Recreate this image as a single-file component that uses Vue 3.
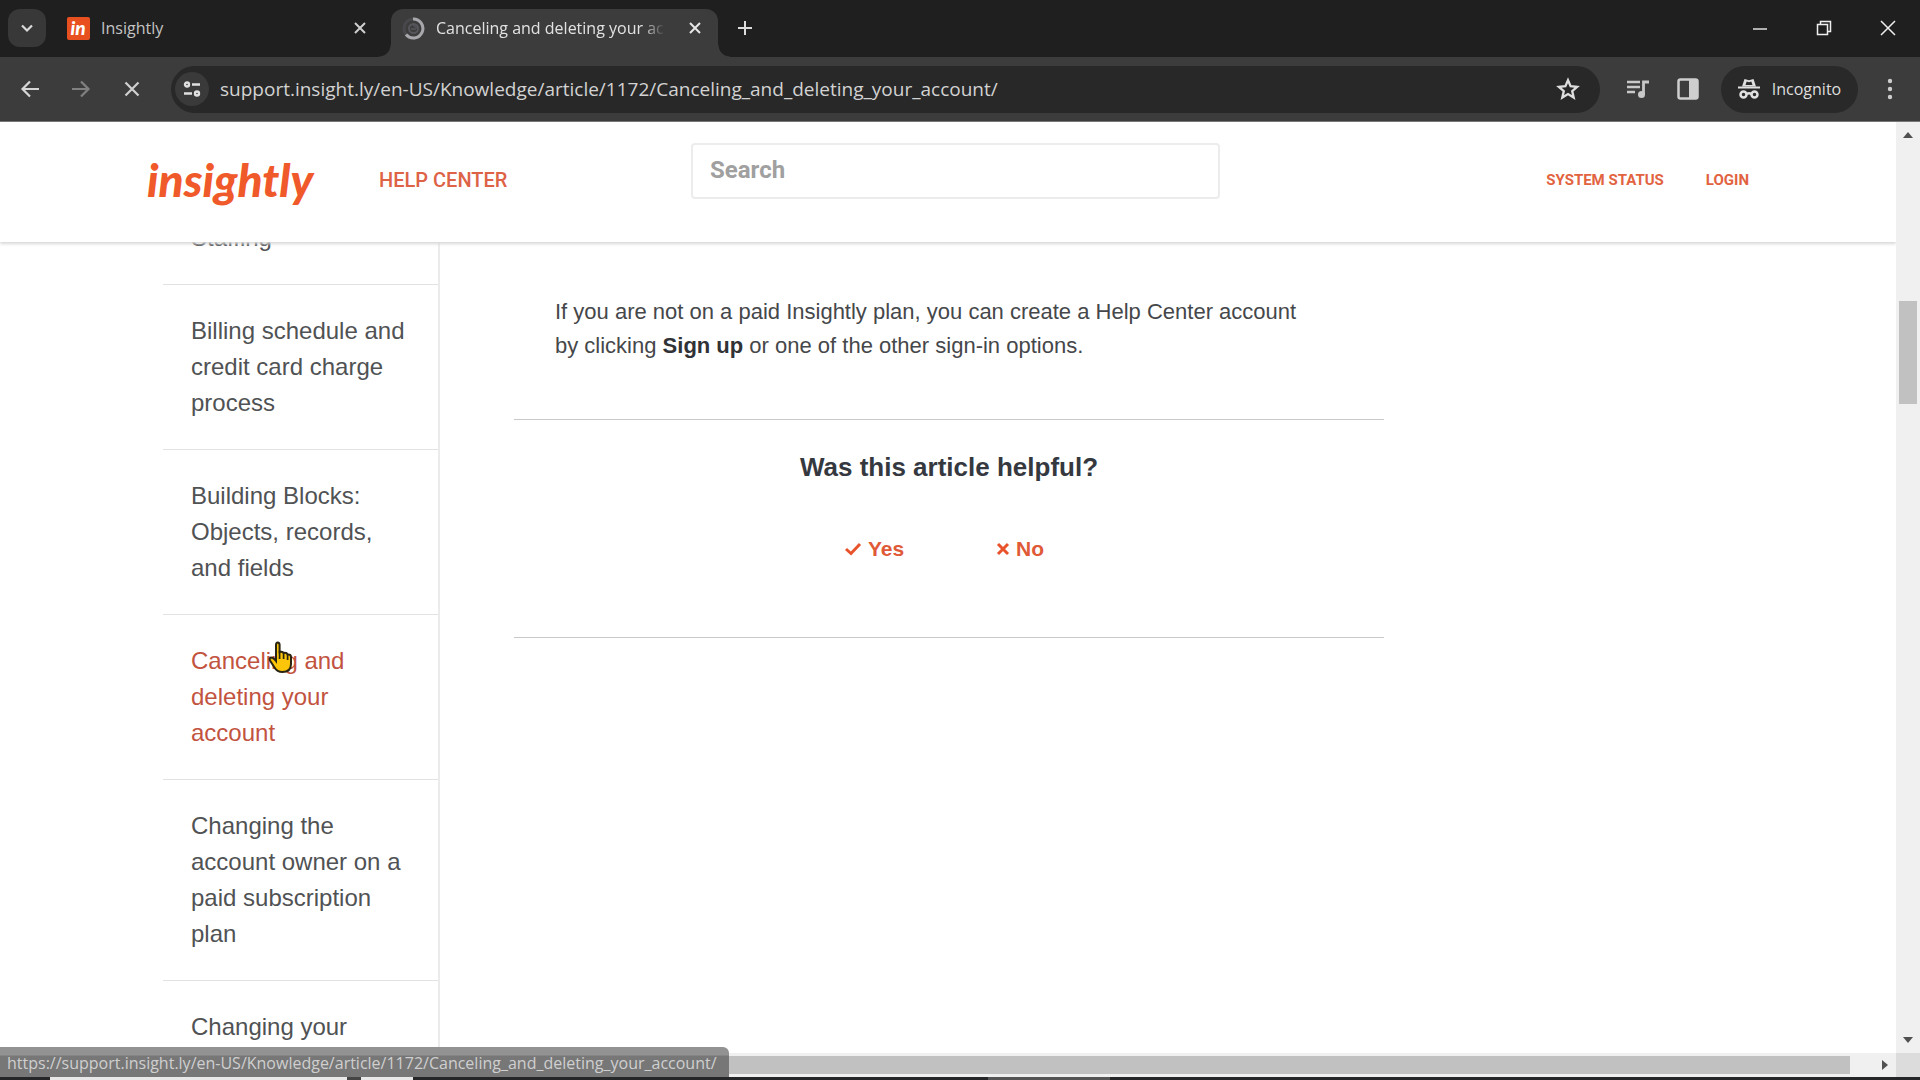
<script setup>
const url = 'support.insight.ly/en-US/Knowledge/article/1172/Canceling_and_deleting_your_account/'
const articles = [
  { title: 'Staffing' },
  { title: 'Billing schedule and credit card charge process' },
  { title: 'Building Blocks: Objects, records, and fields' },
  { title: 'Canceling and deleting your account', active: true },
  { title: 'Changing the account owner on a paid subscription plan' },
  { title: 'Changing your' },
]
</script>

<template>
  <div class="window">
    <div class="tabstrip">
      <button class="tab-search" aria-label="Search tabs">
        <svg width="14" height="14" viewBox="0 0 14 14"><path d="M2 4.5l5 5 5-5" fill="none" stroke="#dadada" stroke-width="2.2" /></svg>
      </button>
      <div class="tab">
        <svg class="favicon" width="23" height="23" viewBox="0 0 23 23">
          <rect width="23" height="23" rx="2" fill="#e8501f" />
          <text x="11" y="18" text-anchor="middle" class="favicon-text">in</text>
        </svg>
        <span class="tab-title">Insightly</span>
        <button class="tab-close" aria-label="Close tab">
          <svg width="14" height="14" viewBox="0 0 14 14"><path d="M2 2l10 10M12 2L2 12" stroke="#cfcfcf" stroke-width="2" /></svg>
        </button>
      </div>
      <div class="tab active">
        <svg class="favicon" width="23" height="23" viewBox="0 0 23 23" fill="none">
          <circle cx="11.5" cy="11.5" r="9.5" stroke="#48484c" stroke-width="3" />
          <path d="M11 2a9.5 9.5 0 1 1-7 15.5" stroke="#a8a8ac" stroke-width="3" />
          <circle cx="11.5" cy="11.5" r="4.5" stroke="#56565c" stroke-width="2" />
          <path d="M9 12h5M11 8l4 3" stroke="#56565c" stroke-width="1.5" />
        </svg>
        <span class="tab-title fade">Canceling and deleting your account</span>
        <button class="tab-close" aria-label="Close tab">
          <svg width="14" height="14" viewBox="0 0 14 14"><path d="M2 2l10 10M12 2L2 12" stroke="#e6e6e6" stroke-width="2" /></svg>
        </button>
      </div>
      <button class="new-tab" aria-label="New tab">
        <svg width="16" height="16" viewBox="0 0 16 16"><path d="M8 1v14M1 8h14" stroke="#dcdcdc" stroke-width="2" /></svg>
      </button>
      <div class="controls">
        <button aria-label="Minimize"><svg width="16" height="16" viewBox="0 0 16 16"><path d="M1 9h14" stroke="#eee" stroke-width="1.4" /></svg></button>
        <button aria-label="Restore"><svg width="16" height="16" viewBox="0 0 16 16" fill="none" stroke="#eee" stroke-width="1.5"><path d="M1.5 4.5h10v10h-10zM4.5 4V1.5h10v10H12" /></svg></button>
        <button aria-label="Close"><svg width="16" height="16" viewBox="0 0 16 16"><path d="M1 1l14 14M15 1L1 15" stroke="#eee" stroke-width="1.5" /></svg></button>
      </div>
    </div>

    <div class="toolbar">
      <div class="nav">
        <button aria-label="Back"><svg width="20" height="20" viewBox="0 0 20 20" fill="none" stroke="#d6d6d6" stroke-width="2.2"><path d="M19 10H3M10 2.5L2.5 10l7.5 7.5" /></svg></button>
        <button aria-label="Forward"><svg width="20" height="20" viewBox="0 0 20 20" fill="none" stroke="#808080" stroke-width="2.2"><path d="M1 10h16M10 2.5l7.5 7.5-7.5 7.5" /></svg></button>
        <button aria-label="Stop loading"><svg width="20" height="20" viewBox="0 0 20 20" stroke="#d0d0d0" stroke-width="2.2"><path d="M3.5 3.5l13 13M16.5 3.5l-13 13" /></svg></button>
      </div>
      <div class="omnibox">
        <button class="site-info" aria-label="Site information">
          <svg width="18" height="16" viewBox="0 0 18 16" fill="none" stroke="#e0e0e0" stroke-width="2.4"><circle cx="4" cy="3.5" r="2" /><path d="M9 3.5h8M1 12.5h8" /><circle cx="14" cy="12.5" r="2" /></svg>
        </button>
        <input class="url" aria-label="Address" :value="url" />
        <button class="star" aria-label="Bookmark this tab">
          <svg width="24" height="24" viewBox="0 0 24 24" fill="none" stroke="#dedede" stroke-width="2.3"><path d="M12 3.2l2.6 6 6.5.6-4.9 4.3 1.5 6.4L12 17.1l-5.7 3.4 1.5-6.4-4.9-4.3 6.5-.6z" /></svg>
        </button>
      </div>
      <button class="tool" aria-label="Media controls">
        <svg width="24" height="20" viewBox="0 0 24 20"><path d="M1 3h13M1 8h13M1 13h8" stroke="#c8c8c8" stroke-width="2.5" /><path d="M17.5 16V3H23" fill="none" stroke="#c8c8c8" stroke-width="2.8" /><circle cx="15.5" cy="15.5" r="3.5" fill="#c8c8c8" /></svg>
      </button>
      <button class="tool" aria-label="Side panel">
        <svg width="22" height="22" viewBox="0 0 22 22"><rect x="1.5" y="1.5" width="19" height="19" rx="2" fill="none" stroke="#cecece" stroke-width="2.5" /><path d="M12 2h8v18h-8z" fill="#cecece" /></svg>
      </button>
      <button class="incognito">
        <svg width="22" height="22" viewBox="0 0 22 22"><path d="M0 9.5h22" stroke="#e0e0e0" stroke-width="2" /><path d="M4 8.5L6.5 1l4.5 1.2L15.5 1 18 8.5z" fill="#e0e0e0" /><path d="M7.5 7l1.2-3.5 2.3.7 2.3-.7L14.5 7z" fill="#292929" /><g fill="none" stroke="#e0e0e0" stroke-width="2.5"><circle cx="5.5" cy="16.5" r="3" /><circle cx="16.5" cy="16.5" r="3" /><path d="M8.5 16q2.5-1.5 5 0" /></g></svg>
        <span>Incognito</span>
      </button>
      <button class="menu" aria-label="Menu">
        <svg width="6" height="22" viewBox="0 0 6 22" fill="#cdcdcd"><circle cx="3" cy="3" r="2.2" /><circle cx="3" cy="11" r="2.2" /><circle cx="3" cy="19" r="2.2" /></svg>
      </button>
    </div>

    <div class="viewport">
      <div class="page">
        <header class="site-header">
          <div class="brand">
            <a href="#" class="logo">insightly</a>
            <a href="#" class="help">HELP CENTER</a>
          </div>
          <input class="search" type="search" placeholder="Search" aria-label="Search" />
          <nav class="account">
            <a href="#">SYSTEM STATUS</a>
            <a href="#">LOGIN</a>
          </nav>
        </header>
        <div class="body">
          <nav class="sidebar">
            <a v-for="a in articles" :key="a.title" href="#" :class="{ active: a.active }">{{ a.title }}</a>
          </nav>
          <main class="article">
            <p>If you are not on a paid Insightly plan, you can create a Help Center account by clicking <strong>Sign up</strong> or one of the other sign-in options.</p>
            <section class="feedback">
              <h2>Was this article helpful?</h2>
              <div class="votes">
                <button>
                  <svg width="18" height="16" viewBox="0 0 18 16"><path d="M2 8l5 4.5L16 3" fill="none" stroke="#e8532b" stroke-width="3" /></svg>
                  Yes
                </button>
                <button>
                  <svg width="14" height="16" viewBox="0 0 14 16"><path d="M2 3l10 10M12 3L2 13" stroke="#e8532b" stroke-width="3" /></svg>
                  No
                </button>
              </div>
            </section>
          </main>
        </div>
        <svg class="pointer" width="26" height="34" viewBox="0 0 26 34">
          <path d="M8 18V4q0-2.5 1.8-2.5T11.6 4v7q3-1 4 1 3-.7 4 1.5 3.4-.5 3.4 2.5v7q0 8-8.5 8-5.5 0-8-4.500L2 19.500q-1-2.500 1-3 2.500 0 5 3.500z" fill="#fbc60a" stroke="#2a2413" stroke-width="2" />
          <path d="M11.600 10v8M15.600 12v6M19.600 13.500V19" stroke="#2a2413" stroke-width="1.700" />
        </svg>
      </div>
      <div class="vbar">
        <svg width="12" height="8" viewBox="0 0 12 8"><path d="M1 7l5-6 5 6z" fill="#505050" /></svg>
        <div class="vtrack"><div class="vthumb"></div></div>
        <svg width="12" height="8" viewBox="0 0 12 8"><path d="M1 1l5 6 5-6z" fill="#505050" /></svg>
      </div>
      <div class="hbar">
        <div class="hthumb"></div>
        <svg width="8" height="12" viewBox="0 0 8 12"><path d="M1 1l6 5-6 5z" fill="#505050" /></svg>
      </div>
      <div class="corner"></div>
      <div class="status">https://{{ url }}</div>
    </div>
    <div class="taskbar"><i class="light"><b></b></i><i class="grey"></i></div>
  </div>
</template>

<style>
body {
  margin: 0;
  overflow: hidden;
}
</style>

<style scoped>
* {
  box-sizing: border-box;
}
button {
  padding: 0;
  border: 0;
  background: none;
  color: inherit;
  font: inherit;
  display: flex;
  align-items: center;
  justify-content: center;
  flex: none;
}
a {
  text-decoration: none;
}
svg {
  display: block;
  flex: none;
}
.window {
  height: 100vh;
  display: flex;
  flex-direction: column;
  background: #fff;
  font-family: "Open Sans", sans-serif;
}

.tabstrip {
  flex: none;
  height: 57px;
  display: flex;
  padding: 9px 0 0 8px;
  background: #1f1f1f;
}
.tab-search {
  width: 38px;
  height: 38px;
  border-radius: 12px;
  background: #383838;
}
.tab {
  width: 327px;
  height: 38px;
  display: flex;
  align-items: center;
  padding: 0 15px 0 11px;
  margin-left: 10px;
  color: #c4c4c4;
  font-size: 16px;
}
.tab.active {
  position: relative;
  height: 48px;
  margin-left: 8px;
  padding-bottom: 10px;
  border-radius: 12px 12px 0 0;
  background: #3c3c3c;
  color: #e2e2e2;
}
.tab.active::before,
.tab.active::after {
  content: "";
  position: absolute;
  bottom: 0;
  width: 12px;
  height: 12px;
}
.tab.active::before {
  right: 100%;
  background: radial-gradient(circle at 0 0, #1f1f1f 11px, #3c3c3c 12px);
}
.tab.active::after {
  left: 100%;
  background: radial-gradient(circle at 100% 0, #1f1f1f 11px, #3c3c3c 12px);
}
.favicon-text {
  font: italic 900 19px Lato, sans-serif;
  fill: #fff;
}
.tab-title {
  flex: 1;
  min-width: 0;
  margin: 0 22px 0 11px;
  overflow: hidden;
  white-space: nowrap;
}
.fade {
  -webkit-mask-image: linear-gradient(to right, #000 90%, transparent);
  mask-image: linear-gradient(to right, #000 90%, transparent);
}
.tab-close {
  width: 16px;
}
.new-tab {
  width: 38px;
  height: 38px;
  margin-left: 8px;
}
.controls {
  display: flex;
  gap: 48px;
  height: 38px;
  margin-left: auto;
  padding-right: 24px;
}

.toolbar {
  flex: none;
  height: 65px;
  display: flex;
  align-items: center;
  padding-right: 27px;
  border-bottom: 1px solid #777;
  background: #3c3c3c;
  color: #dedede;
}
.nav {
  display: flex;
  gap: 31px;
  padding: 0 29px 0 20px;
}
.omnibox {
  flex: 1;
  min-width: 0;
  height: 47px;
  display: flex;
  align-items: center;
  padding: 0 20px 0 4px;
  border-radius: 24px;
  background: #282828;
}
.site-info {
  width: 34px;
  height: 34px;
  border-radius: 50%;
  background: #3a3a3a;
}
.url {
  flex: 1;
  min-width: 0;
  margin-left: 11px;
  padding: 0;
  border: 0;
  outline: 0;
  background: none;
  color: #d2d2d2;
  font: 19px "Open Sans", sans-serif;
}
.tool {
  width: 24px;
  margin-left: 26px;
}
.incognito {
  width: 137px;
  height: 47px;
  gap: 12px;
  margin-left: 21px;
  border-radius: 24px;
  background: #292929;
  font-size: 16px;
}
.menu {
  margin-left: 29px;
}

.viewport {
  position: relative;
  flex: 1;
  min-height: 0;
  display: grid;
  grid-template-columns: minmax(0, 1fr) 24px;
  grid-template-rows: minmax(0, 1fr) 24px;
}
.page {
  position: relative;
  overflow: hidden;
  display: flex;
  flex-direction: column;
  background: #fff;
}
.site-header {
  position: relative;
  z-index: 1;
  flex: none;
  height: 120px;
  display: grid;
  grid-template-columns: minmax(0, 544fr) minmax(0, 529fr) minmax(0, 529fr);
  padding: 21px 147px 0;
  background: #fff;
  box-shadow: 0 2px 3px #d8d8d8;
  font-family: Roboto, sans-serif;
  font-weight: 500;
}
.brand {
  display: flex;
  align-items: center;
  height: 74px;
}
.logo {
  width: 232px;
  color: #f0592a;
  font: italic 900 46px/60px Lato, sans-serif;
}
.help {
  color: #dd6246;
  font-size: 20px;
}
.search {
  height: 56px;
  padding: 0 17px 2px;
  border: 2px solid #ececec;
  border-radius: 4px;
  outline: 0;
  appearance: none;
  background: #fff;
  font: bold 24px Roboto, sans-serif;
}
.search::placeholder {
  color: #a0a0a0;
}
.account {
  display: flex;
  align-items: center;
  justify-content: flex-end;
  gap: 42px;
  height: 74px;
}
.account a {
  color: #e2633f;
  font-size: 15px;
  font-weight: 700;
}
.body {
  flex: 1;
  min-height: 0;
  display: flex;
  align-items: flex-start;
  padding: 0 163px;
  font-family: "Liberation Sans", Arial, sans-serif;
  color: #45474a;
}
.sidebar {
  flex: none;
  width: 277px;
  margin-top: -50px;
  border-right: 2px solid #ebebeb;
}
.sidebar a {
  display: block;
  padding: 28px;
  border-bottom: 1px solid #e2e2e2;
  color: #505254;
  font-size: 24px;
  line-height: 36px;
}
.sidebar a.active {
  color: #c2533f;
}
.article {
  flex: 1;
  max-width: 870px;
  margin-left: 74px;
}
.article p {
  margin: 0;
  padding: 53px 70px 56px 41px;
  font-size: 22px;
  line-height: 34px;
}
.article strong {
  color: #303236;
}
.feedback {
  height: 219px;
  padding-top: 28px;
  border: solid #c9c9c9;
  border-width: 1px 0;
  text-align: center;
}
.feedback h2 {
  margin: 0;
  color: #35393f;
  font-size: 26px;
  line-height: 38px;
}
.votes {
  display: flex;
  justify-content: center;
  gap: 92px;
  margin-top: 48px;
  padding-right: 10px;
  color: #e05a38;
  font-size: 21px;
  line-height: 30px;
  font-weight: bold;
}
.votes button {
  gap: 6px;
}
.pointer {
  position: absolute;
  left: 268px;
  top: 519px;
}

.vbar {
  display: flex;
  flex-direction: column;
  align-items: center;
  padding: 9px 0;
  background: #f0f0f0;
}
.vtrack {
  flex: 1;
  width: 18px;
  padding-top: 162px;
}
.vthumb {
  height: 103px;
  background: #c1c1c1;
}
.hbar {
  display: flex;
  align-items: center;
  padding-right: 7px;
  background: #f0f0f0;
}
.hthumb {
  flex: 1;
  height: 18px;
  margin-right: 31px;
  background: #c1c1c1;
}
.corner {
  background: #dcdcdc;
}
.status {
  position: absolute;
  left: 0;
  bottom: 0;
  width: 729px;
  height: 30px;
  padding-left: 7px;
  border-top-right-radius: 6px;
  background: linear-gradient(#929292 8px, #777 9px);
  color: #cfcfcf;
  font-size: 16px;
  line-height: 32px;
  white-space: nowrap;
}
.taskbar {
  flex: none;
  height: 3px;
  display: flex;
  padding-left: 50px;
  background: #242628;
}
.light {
  width: 363px;
  padding-left: 297px;
  background: #e8e8e8;
}
.light b {
  display: block;
  width: 14px;
  height: 3px;
  background: #444;
}
.grey {
  width: 122px;
  margin-left: 575px;
  background: #555;
}
</style>
